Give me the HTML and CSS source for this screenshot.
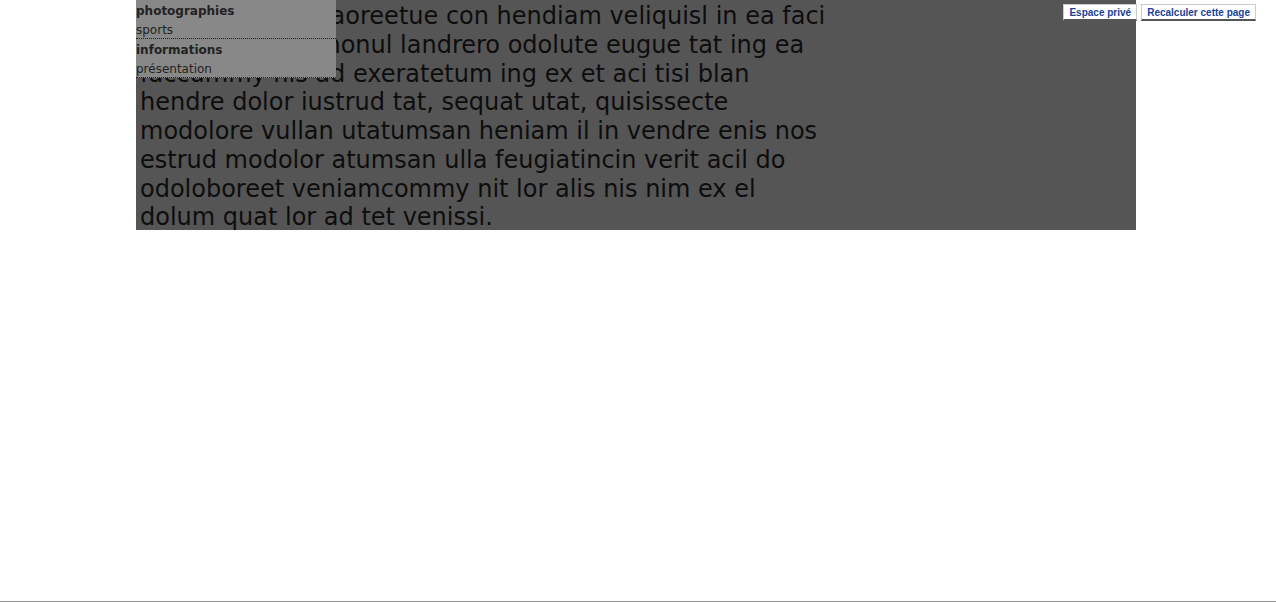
FILE: index.html
```html
<!DOCTYPE html>
<html lang="fr">
<head>
<meta charset="utf-8">
<title>Page</title>
<link rel="stylesheet" href="styles.css">
</head>
<body>
<div class="page">
  <div class="content">
    <p class="texte">Duis nostrud it laoreetue con hendiam veliquisl in ea faci<br>quatis, commy nonul landrero odolute eugue tat ing ea<br>faccummy nis ad exeratetum ing ex et aci tisi blan<br>hendre dolor iustrud tat, sequat utat, quisissecte<br>modolore vullan utatumsan heniam il in vendre enis nos<br>estrud modolor atumsan ulla feugiatincin verit acil do<br>odoloboreet veniamcommy nit lor alis nis nim ex el<br>dolum quat lor ad tet venissi.</p>
    <ul class="menu">
      <li class="rubrique">
        <span class="titre">photographies</span>
        <a class="item" href="#">sports</a>
      </li>
      <li class="rubrique">
        <span class="titre">informations</span>
        <a class="item" href="#">présentation</a>
      </li>
    </ul>
  </div>
</div>
<div class="admin">
  <a class="admin-btn" href="#">Espace privé</a>
  <a class="admin-btn" href="#">Recalculer cette page</a>
</div>
</body>
</html>
```
FILE: styles.css
```css
html, body {
  margin: 0;
  padding: 0;
}
body {
  min-height: 100vh;
  box-sizing: border-box;
  border-bottom: 1px solid #999;
  background: #fff;
  font-family: "DejaVu Sans", Verdana, sans-serif;
}
.page {
  margin-left: 136px;
  width: 1000px;
}
.content {
  position: relative;
  background: #555;
  height: 230px;
}
.texte {
  margin: 0;
  padding: 2px 0 0 4px;
  font-size: 24px;
  line-height: 28.75px;
  color: #0d0d0d;
  white-space: nowrap;
}
.menu {
  position: absolute;
  top: 0;
  left: 0;
  width: 200px;
  margin: 0;
  padding: 0;
  list-style: none;
  background: #888;
}
.rubrique {
  display: flex;
  flex-direction: column;
  border-bottom: 1px dotted #222;
}
.titre {
  font-weight: bold;
  font-size: 12px;
  line-height: 15px;
  padding-top: 4px;
  color: #222;
}
.item {
  font-size: 12px;
  line-height: 15px;
  padding-top: 4px;
  color: #222;
  text-decoration: none;
}
.admin {
  position: absolute;
  top: 4px;
  right: 20px;
  display: flex;
  gap: 4px;
}
.admin-btn {
  font-family: "Liberation Sans", Arial, sans-serif;
  font-size: 10px;
  font-weight: bold;
  line-height: 13px;
  color: #1a3f9c;
  background: #fff;
  text-decoration: none;
  padding: 1px 5px 0;
  border: 1px solid #ccc;
  border-bottom: 2px solid #555;
}
```
